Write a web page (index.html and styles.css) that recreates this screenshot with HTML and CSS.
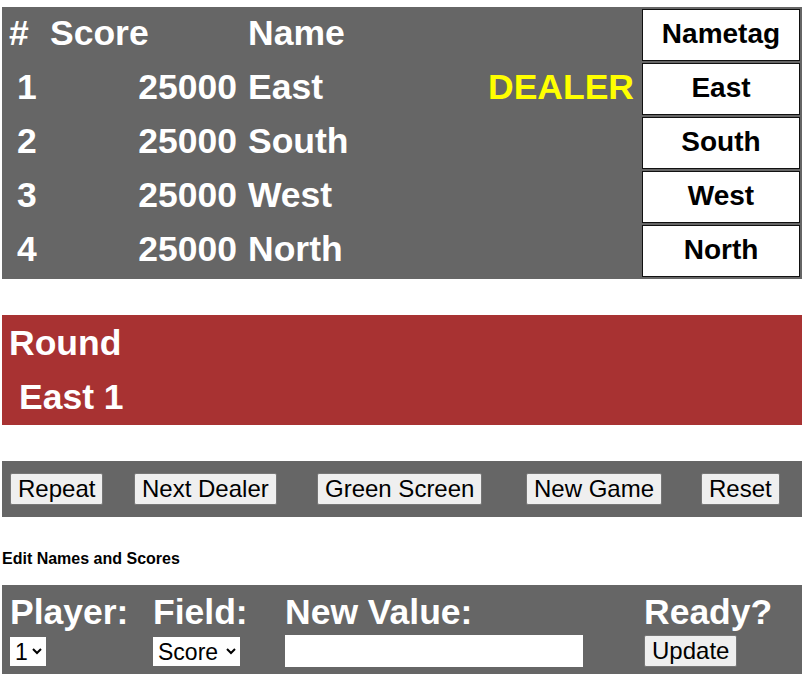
FILE: index.html
```html
<!DOCTYPE html>
<html lang="en">
<head>
<meta charset="utf-8">
<title>Scoreboard</title>
<link rel="stylesheet" href="styles.css">
</head>
<body>
<div class="board">
  <div class="cell hd idx">#</div>
  <div class="cell hd score-h">Score</div>
  <div class="cell hd name">Name</div>
  <div class="cell dealer"></div>
  <div class="tag">Nametag</div>

  <div class="cell idx num">1</div>
  <div class="cell score">25000</div>
  <div class="cell name">East</div>
  <div class="cell dealer">DEALER</div>
  <div class="tag">East</div>

  <div class="cell idx num">2</div>
  <div class="cell score">25000</div>
  <div class="cell name">South</div>
  <div class="cell dealer"></div>
  <div class="tag">South</div>

  <div class="cell idx num">3</div>
  <div class="cell score">25000</div>
  <div class="cell name">West</div>
  <div class="cell dealer"></div>
  <div class="tag">West</div>

  <div class="cell idx num">4</div>
  <div class="cell score">25000</div>
  <div class="cell name">North</div>
  <div class="cell dealer"></div>
  <div class="tag">North</div>
</div>

<div class="round">
  <div class="round-cell round-h">Round</div>
  <div class="round-cell round-v">East 1</div>
</div>

<div class="actions">
  <div><button class="btn">Repeat</button></div>
  <div><button class="btn">Next Dealer</button></div>
  <div><button class="btn">Green Screen</button></div>
  <div><button class="btn">New Game</button></div>
  <div><button class="btn">Reset</button></div>
</div>

<div class="edit-title">Edit Names and Scores</div>

<form class="edit">
  <label class="lbl" for="player">Player:</label>
  <label class="lbl" for="field">Field:</label>
  <label class="lbl" for="value">New Value:</label>
  <span class="lbl">Ready?</span>
  <div class="ctl"><select id="player" class="sel sel-player"><option>1</option><option>2</option><option>3</option><option>4</option></select></div>
  <div class="ctl"><select id="field" class="sel sel-field"><option>Score</option><option>Name</option></select></div>
  <div class="ctl"><input id="value" class="txt" type="text"></div>
  <div class="ctl"><button type="button" class="btn">Update</button></div>
</form>
</body>
</html>
```
FILE: styles.css
```css
* { box-sizing: border-box; }

body {
  margin: 0;
  font-family: "Liberation Sans", Arial, sans-serif;
  background: #fff;
}

.board {
  margin: 7px 0 0 2px;
  width: 800px;
  background: #666666;
  padding: 2px;
  display: grid;
  grid-template-columns: 38px 198px 236px 158px 158px;
  grid-auto-rows: 52px;
  gap: 2px;
}

.cell {
  color: #fff;
  font-weight: bold;
  font-size: 35.5px;
  line-height: 48px;
  padding-bottom: 4px;
  white-space: nowrap;
}

.idx { padding-left: 5px; }
.idx.num { padding-left: 13px; }
.score-h { padding-left: 6px; }
.score { text-align: right; padding-right: 5px; }
.name { padding-left: 4px; }
.dealer { text-align: right; padding-right: 6px; color: #ffff00; }

.tag {
  background: #fff;
  border: 1px solid #111;
  color: #000;
  font-weight: bold;
  font-size: 28px;
  text-align: center;
  line-height: 48px;
  padding-bottom: 2px;
}

.round {
  margin: 36px 0 0 2px;
  width: 800px;
  background: #a83232;
  padding: 2px;
  display: grid;
  grid-auto-rows: 52px;
  gap: 2px;
}

.round-cell {
  color: #fff;
  font-weight: bold;
  font-size: 35.5px;
  line-height: 52px;
}

.round-h { padding-left: 5px; }
.round-v { padding-left: 15px; }

.actions {
  margin: 36px 0 0 2px;
  width: 800px;
  background: #666666;
  padding: 12px 8px;
  display: grid;
  grid-template-columns: 124px 183px 209px 175px auto;
  align-items: center;
}

.btn {
  font-family: "Liberation Sans", Arial, sans-serif;
  font-size: 24px;
  height: 32px;
  line-height: 28px;
  padding: 1px 7px;
  color: #000;
  background: #efefef;
  border: 1px solid #767676;
  border-radius: 2px;
  margin: 0;
}

.edit-title {
  margin: 33px 0 0 2px;
  font-size: 16px;
  font-weight: bold;
  line-height: 18px;
  color: #000;
}

.edit {
  margin: 17px 0 0 2px;
  width: 800px;
  background: #666666;
  padding: 7px 8px 7px;
  display: grid;
  grid-template-columns: 143px 132px 359px auto;
  grid-template-rows: 40px 32px;
  row-gap: 3px;
}

.lbl {
  color: #fff;
  font-weight: bold;
  font-size: 35.5px;
  line-height: 40px;
  white-space: nowrap;
}

.ctl {
  display: flex;
  align-items: center;
  height: 32px;
}

.sel {
  font-family: "Liberation Sans", Arial, sans-serif;
  font-size: 23px;
  height: 29px;
  background: #fff;
  color: #000;
  border: 1px solid #fff;
  border-radius: 0;
  margin: 0;
}

.sel-player { width: 36px; }
.sel-field { width: 87px; }

.txt {
  width: 298px;
  height: 32px;
  font-family: "Liberation Sans", Arial, sans-serif;
  font-size: 23px;
  background: #fff;
  border: 1px solid #fff;
  margin: 0;
  padding: 1px 4px;
}
```
